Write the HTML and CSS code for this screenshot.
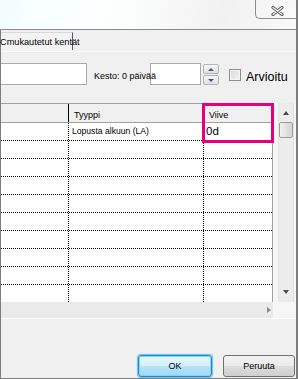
FILE: index.html
```html
<!DOCTYPE html>
<html lang="fi">
<head>
    <meta charset="UTF-8">
    <meta name="viewport" content="width=device-width, initial-scale=1.0">
    <title>Tehtävän tiedot</title>
    <link rel="stylesheet" href="styles.css">
</head>
<body>
    <div class="window">
        <div class="titlebar">
            <div class="close-btn">
                <svg width="13" height="10" viewBox="0 0 13 10">
                    <path d="M2 1.5 L11 8.5 M11 1.5 L2 8.5" stroke="#5f5f5f" stroke-width="3.2" stroke-linecap="round"/>
                    <path d="M2 1.5 L11 8.5 M11 1.5 L2 8.5" stroke="#f4f4f4" stroke-width="1.2" stroke-linecap="round"/>
                </svg>
            </div>
        </div>

        <div class="main">
            <div class="tabstrip">
                <div class="tab">Cmukautetut kentät</div>
            </div>

            <div class="fields">
                <div class="textbox wide"></div>
                <span class="duration">Kesto: 0 päivää</span>
                <div class="textbox small"></div>
                <div class="spinner">
                    <span class="spin up"></span>
                    <span class="spin down"></span>
                </div>
                <span class="checkbox"></span>
                <span class="check-label">Arvioitu</span>
            </div>

            <div class="grid">
                <div class="grid-main">
                    <div class="table">
                        <div class="row head">
                            <div class="cell"></div>
                            <div class="cell">Tyyppi</div>
                            <div class="cell">Viive</div>
                        </div>
                        <div class="row">
                            <div class="cell"></div>
                            <div class="cell">Lopusta alkuun (LA)</div>
                            <div class="cell lag">0d</div>
                        </div>
                        <div class="row"><div class="cell"></div><div class="cell"></div><div class="cell"></div></div>
                        <div class="row"><div class="cell"></div><div class="cell"></div><div class="cell"></div></div>
                        <div class="row"><div class="cell"></div><div class="cell"></div><div class="cell"></div></div>
                        <div class="row"><div class="cell"></div><div class="cell"></div><div class="cell"></div></div>
                        <div class="row"><div class="cell"></div><div class="cell"></div><div class="cell"></div></div>
                        <div class="row"><div class="cell"></div><div class="cell"></div><div class="cell"></div></div>
                        <div class="row"><div class="cell"></div><div class="cell"></div><div class="cell"></div></div>
                        <div class="row"><div class="cell"></div><div class="cell"></div><div class="cell"></div></div>
                        <div class="row"><div class="cell"></div><div class="cell"></div><div class="cell"></div></div>
                    </div>
                    <div class="hscroll"><span class="arrow-right"></span></div>
                </div>
                <div class="vscroll">
                    <div class="track">
                        <span class="arrow-up"></span>
                        <span class="thumb"></span>
                        <span class="spacer"></span>
                        <span class="arrow-down"></span>
                    </div>
                </div>
                <!-- highlight around the lag column -->
                <div class="highlight"></div>
            </div>

            <div class="footer">
                <button class="btn btn-default">OK</button>
                <button class="btn">Peruuta</button>
            </div>
        </div>
    </div>
</body>
</html>
```

FILE: styles.css
```css
body {
    margin: 0;
    font-family: "Liberation Sans", Arial, sans-serif;
    font-size: 9px;
    color: #000;
    background: #f0f0f0;
    overflow: hidden;
}
.window {
    width: 298px;
    height: 379px;
    box-sizing: border-box;
    border-right: 2px solid #7d7d7d;
    border-bottom: 1px solid #7d7d7d;
    display: flex;
    flex-direction: column;
    background: #f0f0f0;
}
.titlebar {
    height: 29px;
    flex: none;
    border-bottom: 1px solid #8a8a8a;
    background: linear-gradient(100deg, #f3fdfd 0%, #fdffff 35%, #f6f6f6 62%, #f1f1f1 75%, #fafafa 100%);
    display: flex;
    justify-content: flex-end;
    align-items: flex-start;
}
.close-btn {
    width: 41px;
    height: 19px;
    box-sizing: border-box;
    border-left: 1px solid #8e8e8e;
    border-bottom: 1px solid #8e8e8e;
    border-bottom-left-radius: 5px;
    display: flex;
    justify-content: center;
    align-items: center;
    padding-top: 4px;
    padding-left: 2px;
}
.main {
    flex: 1;
    display: flex;
    flex-direction: column;
    border-left: 1px solid #7d7d7d;
}
.tabstrip {
    height: 21px;
    flex: none;
    border-bottom: 1px solid #fafafa;
}
.tab {
    margin-top: 2px;
    width: 72px;
    height: 18px;
    box-sizing: border-box;
    border-top: 1px solid #d9d9d9;
    border-right: 1px solid #5a5a5a;
    background: #f3f3f3;
    padding-top: 4px;
    line-height: 11px;
    font-size: 9.2px;
    white-space: nowrap;
    text-indent: -1px;
}
.fields {
    margin-top: 11px;
    height: 22px;
    flex: none;
    display: flex;
    align-items: center;
}
.textbox {
    height: 22px;
    box-sizing: border-box;
    background: #fff;
    border: 1px solid #a9a9a9;
}
.textbox.wide {
    width: 86px;
    border-left: none;
}
.textbox.small {
    width: 51px;
}
.duration {
    margin-left: 7px;
    width: 56px;
    white-space: nowrap;
    position: relative;
    z-index: 1;
    padding-top: 3px;
}
.spinner {
    margin-left: 2px;
    width: 16px;
    height: 21px;
    display: flex;
    flex-direction: column;
    gap: 1px;
    padding-top: 1px;
}
.spin {
    flex: 1;
    box-sizing: border-box;
    border: 1px solid #b3b3b3;
    border-radius: 2px;
    background: linear-gradient(#f7f7f7, #e0e0e0);
    display: flex;
    justify-content: center;
    align-items: center;
}
.spin.up::after {
    content: "";
    border-left: 3px solid transparent;
    border-right: 3px solid transparent;
    border-bottom: 3px solid #3f5680;
}
.spin.down::after {
    content: "";
    border-left: 3px solid transparent;
    border-right: 3px solid transparent;
    border-top: 3px solid #3f5680;
}
.checkbox {
    margin-left: 10px;
    width: 12px;
    height: 12px;
    box-sizing: border-box;
    border: 1px solid #8e8e8e;
    background: linear-gradient(135deg, #d8d8d8, #f6f6f6);
    box-shadow: inset 0 0 0 1px #f4f4f4;
    margin-top: 1px;
}
.check-label {
    margin-left: 5px;
    font-size: 12.5px;
    padding-top: 6px;
}
.grid {
    margin-top: 18px;
    height: 215px;
    flex: none;
    display: flex;
    position: relative;
}
.grid-main {
    width: 272px;
    display: flex;
    flex-direction: column;
}
.table {
    height: 199px;
    box-sizing: border-box;
    border-top: 1px solid #a0a0a0;
    border-right: 1px solid #a0a0a0;
    background: #fff;
    overflow: hidden;
}
.row {
    display: grid;
    grid-template-columns: 68px 135px 1fr;
    height: 18px;
    box-sizing: border-box;
    border-bottom: 1px dotted #000;
}
.cell {
    box-sizing: border-box;
    border-right: 1px dotted #000;
    padding-left: 3px;
    line-height: 17px;
    font-size: 8.6px;
    white-space: nowrap;
}
.cell:last-child {
    border-right: none;
}
.row.head {
    height: 19px;
    background: #f0f0f0;
    border-bottom: 1px solid #a0a0a0;
}
.row.head .cell {
    font-size: 9px;
    padding-left: 5px;
    padding-top: 6px;
    line-height: 11px;
}
.row.head .cell:first-child {
    border-right: 1px solid #000;
}
.row.head .cell:nth-child(2) {
    border-right: 1px solid #c8c8c8;
}
.cell.lag {
    font-size: 11.5px;
    padding-left: 2px;
}
.hscroll {
    height: 16px;
    background: #eaeaea;
    display: flex;
    justify-content: flex-end;
    align-items: center;
    padding-right: 2px;
}
.arrow-right {
    border-top: 3px solid transparent;
    border-bottom: 3px solid transparent;
    border-left: 4px solid #8a8a8a;
}
.vscroll {
    width: 23px;
    display: flex;
    padding-left: 5px;
    padding-right: 2px;
    box-sizing: border-box;
    background: #f6f6f6;
}
.track {
    width: 16px;
    height: 199px;
    box-sizing: border-box;
    border-left: 1px solid #e3e3e3;
    border-right: 1px solid #e3e3e3;
    background: #ececec;
    display: flex;
    flex-direction: column;
    align-items: center;
}
.arrow-up {
    margin-top: 8px;
    border-left: 3px solid transparent;
    border-right: 3px solid transparent;
    border-bottom: 4px solid #4a4a4a;
}
.thumb {
    margin-top: 7px;
    width: 14px;
    height: 16px;
    box-sizing: border-box;
    border: 1px solid #9c9c9c;
    border-radius: 2px;
    background: linear-gradient(90deg, #f2f2f2, #e2e2e2 50%, #d4d4d4);
}
.spacer {
    flex: 1;
}
.arrow-down {
    margin-bottom: 8px;
    border-left: 3px solid transparent;
    border-right: 3px solid transparent;
    border-top: 4px solid #4a4a4a;
}
.highlight {
    position: absolute;
    left: 201px;
    top: 0;
    width: 72px;
    height: 40px;
    box-sizing: border-box;
    border: 3px solid #e6007e;
    pointer-events: none;
}
.footer {
    flex: 1;
    border-top: 1px solid #fcfcfc;
    display: flex;
    justify-content: flex-end;
    align-items: flex-start;
    gap: 11px;
    padding-top: 36px;
    padding-right: 1px;
}
.btn {
    height: 22px;
    width: 72px;
    box-sizing: border-box;
    border: 1px solid #707070;
    border-radius: 3px;
    background: linear-gradient(#f2f2f2 0%, #ebebeb 48%, #dddddd 52%, #cfcfcf 100%);
    font-family: "Liberation Sans", Arial, sans-serif;
    font-size: 9px;
    color: #000;
    padding: 0;
}
.btn-default {
    width: 74px;
    border-color: #2f86c4;
    background: linear-gradient(#e6f7ff 0%, #d3f0fd 48%, #b6e3fb 52%, #a1d8f6 100%);
    box-shadow: inset 0 0 0 1px #7fd6f8, 0 0 1px 1px #5cc3f0;
}
```
